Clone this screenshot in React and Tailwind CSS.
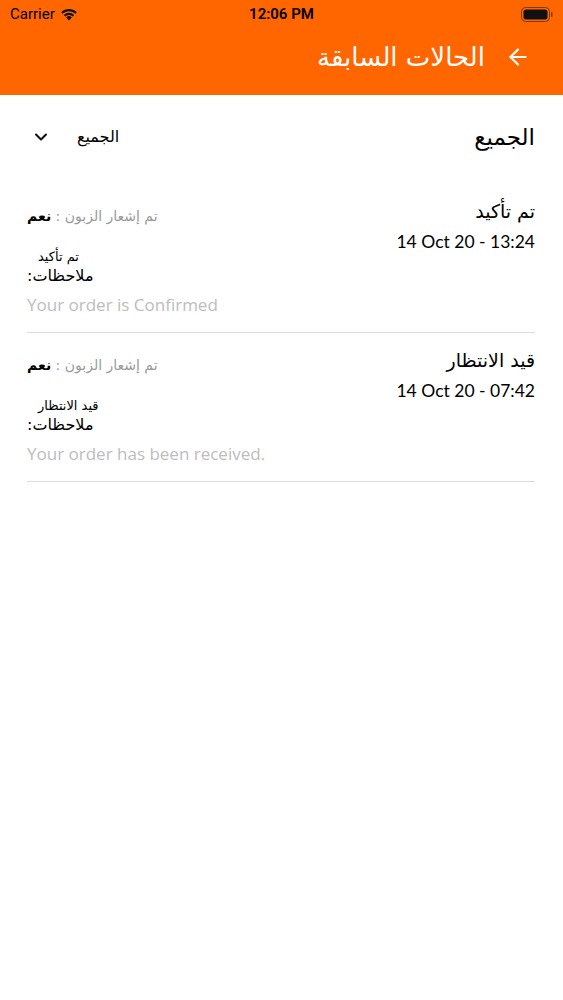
import React from "react";
import { ArrowLeft, ChevronDown } from "lucide-react";

const arabic = { fontFamily: '"DejaVu Sans", "Noto Sans", sans-serif' };
const latin = { fontFamily: 'Lato, "Open Sans", sans-serif' };
const latinWide = { fontFamily: '"Open Sans", Lato, sans-serif' };

const items = [
  {
    title: "تم تأكيد",
    date: "14 Oct 20 - 13:24",
    note: "تم تأكيد",
    message: "Your order is Confirmed",
  },
  {
    title: "قيد الانتظار",
    date: "14 Oct 20 - 07:42",
    note: "قيد الانتظار",
    message: "Your order has been received.",
  },
];

const StatusBar = () => (
  <div className="h-7 flex items-center justify-between px-[10px] text-black">
    <div className="flex items-center gap-[5px] w-[150px]">
      <span className="text-[15px]" style={{ fontFamily: "Roboto, sans-serif" }}>
        Carrier
      </span>
      <svg width="18" height="13" viewBox="0 0 18 13">
        <path d="M9 12.5 L6.2 9.4 A4 4 0 0 1 11.8 9.4 Z" fill="#111" />
        <path d="M3.8 7 A7.4 7.4 0 0 1 14.2 7 L12.8 8.5 A5.4 5.4 0 0 0 5.2 8.5 Z" fill="#111" />
        <path d="M1.2 4.3 A11 11 0 0 1 16.8 4.3 L15.4 5.8 A9 9 0 0 0 2.6 5.8 Z" fill="#111" />
      </svg>
    </div>
    <span className="text-[15px] font-semibold" style={{ fontFamily: "Roboto, sans-serif" }}>
      12:06 PM
    </span>
    <div className="w-[150px] flex justify-end">
      <svg width="32" height="15" viewBox="0 0 32 15">
        <rect x="0.5" y="0.5" width="28" height="14" rx="4" fill="none" stroke="#7a3a00" strokeWidth="1" />
        <rect x="2.5" y="2.5" width="24" height="10" rx="2.5" fill="#111" />
        <rect x="30" y="5" width="1.5" height="5" rx="0.7" fill="#7a3a00" />
      </svg>
    </div>
  </div>
);

const App = () => {
  return (
    <div className="w-full min-h-screen bg-white">
      <div className="bg-[#ff6600] h-[95px]">
        <StatusBar />
        <div className="h-[58px] flex items-center justify-end pr-[32px] gap-[20px]">
          <span className="text-white text-[26px]" style={arabic}>
            الحالات السابقة
          </span>
          <ArrowLeft size={26} color="white" strokeWidth={2} />
        </div>
      </div>

      <div className="mt-[28px] h-[28px] flex items-center justify-between pl-[31px] pr-[28px]">
        <div className="flex items-center gap-[26px]">
          <ChevronDown size={20} strokeWidth={2.5} color="#111" />
          <span className="text-[16px] text-black" style={arabic}>
            الجميع
          </span>
        </div>
        <span className="text-[23px] text-black" style={arabic}>
          الجميع
        </span>
      </div>

      <div className="mt-[33px] pl-[27px] pr-[28px]">
        {items.map((item, i) => (
          <div key={i} className="pt-[14px] border-b border-[#dcdcdc]">
            <div className="flex justify-between items-start">
              <div className="flex flex-col items-start pt-[8px]">
                <div className="h-[20px] leading-[20px] text-[14px]" style={arabic} dir="rtl">
                  <span className="text-[#9a9a9a]">تم إشعار الزبون : </span>
                  <span className="text-black font-bold">نعم</span>
                </div>
                <div className="mt-[22px] h-[18px] flex items-center pl-[11px] text-[13px] text-black" style={arabic}>
                  {item.note}
                </div>
                <div className="h-[20px] leading-[20px] text-[16px] text-black" style={arabic} dir="rtl">
                  ملاحظات:
                </div>
                <div className="mt-[8px] h-[22px] flex items-center text-[17px] text-[#bdbdbd]" style={latinWide}>
                  {item.message}
                </div>
                <div className="h-[16px]" />
              </div>
              <div className="flex flex-col items-end">
                <div className="h-[26px] flex items-center text-[19px] text-black" style={arabic}>
                  {item.title}
                </div>
                <div className="mt-[6px] h-[24px] flex items-center text-[17.5px] text-black" style={latin}>
                  {item.date}
                </div>
              </div>
            </div>
          </div>
        ))}
      </div>
    </div>
  );
};

export default App;
